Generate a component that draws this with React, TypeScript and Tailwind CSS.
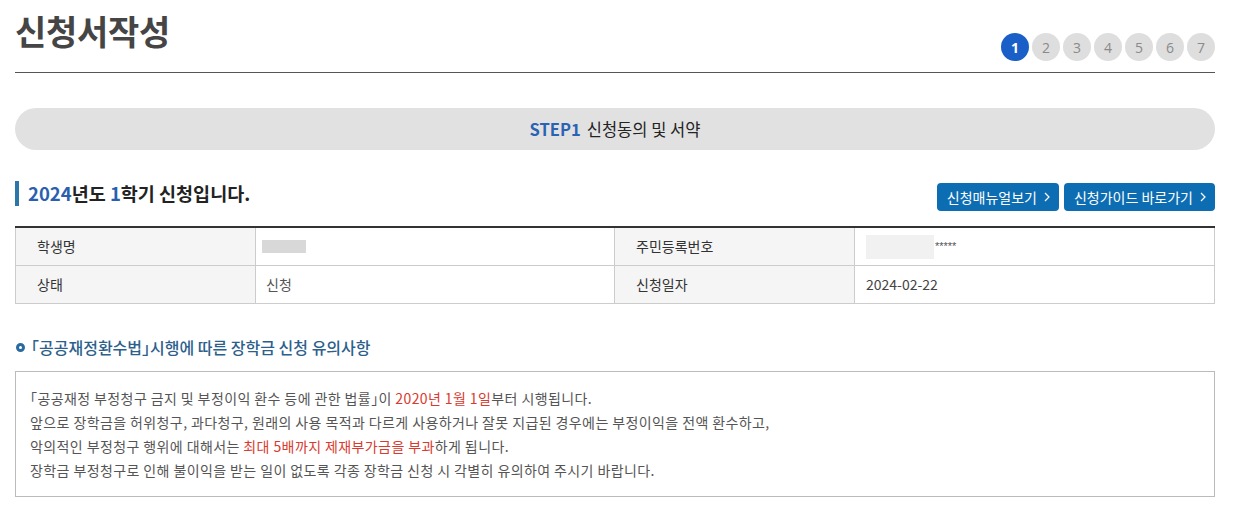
import React from "react";

const F = { fontFamily: '"Noto Sans CJK KR", "Noto Sans", sans-serif' };

function Chevron() {
  return (
    <svg width="6" height="10" viewBox="0 0 6 10" className="ml-[7px]" fill="none">
      <polyline points="1,1 5,5 1,9" stroke="white" strokeWidth="1.2" />
    </svg>
  );
}

export default function App() {
  const steps = [1, 2, 3, 4, 5, 6, 7];
  return (
    <div className="w-[1236px] h-[513px] bg-white text-[#333]" style={F}>
      <div className="pl-[15px] pr-[21px]">
        {/* header */}
        <div className="flex items-end justify-between h-[73px] border-b border-[#555]">
          <h1 className="text-[34px] font-bold text-[#454545] leading-none self-start mt-[14px] tracking-[-0.3px]">신청서작성</h1>
          <div className="flex gap-[3px] mb-[11px]">
            {steps.map((s) => (
              <div
                key={s}
                className={
                  s === 1
                    ? "w-[28px] h-[28px] rounded-full bg-[#1a5fc8] text-white font-bold text-[14px] flex items-center justify-center"
                    : "w-[28px] h-[28px] rounded-full bg-[#dedede] text-[#8a8a8a] text-[14px] flex items-center justify-center"
                }
                style={{ fontFamily: '"Open Sans", sans-serif' }}
              >
                {s}
              </div>
            ))}
          </div>
        </div>

        {/* step banner */}
        <div className="mt-[35px] h-[42px] rounded-full bg-[#e1e1e1] flex items-center justify-center text-[16.5px] text-[#222]">
          <span className="font-bold text-[#2a62b4] mr-[6px]">STEP1</span>
          <span>신청동의 및 서약</span>
        </div>

        {/* section heading */}
        <div className="mt-[33px] flex items-start justify-between h-[28px]">
          <div className="flex items-center mt-[-2px]">
            <div className="w-[4px] h-[25px] bg-[#2b78a8]" />
            <h2 className="ml-[9px] text-[18.5px] font-bold text-[#222] leading-none">
              <span className="text-[#2a5fb0]">2024</span>년도 <span className="text-[#2a5fb0]">1</span>학기 신청입니다.
            </h2>
          </div>
          <div className="flex gap-[5px]">
            <button className="h-[28px] pl-[10px] pr-[9px] rounded-[4px] bg-[#0d6db3] text-white text-[14px] flex items-center">
              신청매뉴얼보기<Chevron />
            </button>
            <button className="h-[28px] pl-[10px] pr-[9px] rounded-[4px] bg-[#0d6db3] text-white text-[14px] flex items-center">
              신청가이드 바로가기<Chevron />
            </button>
          </div>
        </div>

        {/* info table */}
        <div className="mt-[15px] border-t-2 border-[#333] text-[14px]">
          <div className="grid grid-cols-[240px_359px_240px_361px] border-b border-[#ccc] h-[38px]">
            <div className="bg-[#f5f5f5] border-l border-[#ccc] pl-[21px] flex items-center">학생명</div>
            <div className="border-l border-[#ccc] pl-[6px] flex items-center">
              <div className="w-[44px] h-[13px] bg-[#d8d8d8]" />
            </div>
            <div className="bg-[#f5f5f5] border-l border-[#ccc] pl-[21px] flex items-center">주민등록번호</div>
            <div className="border-l border-r border-[#ccc] pl-[11px] flex items-center">
              <div className="w-[68px] h-[24px] bg-[#f1f1f1]" />
              <span className="text-[11px] text-[#555] ml-[1px]" style={{ fontFamily: '"Liberation Sans", sans-serif' }}>*****</span>
            </div>
          </div>
          <div className="grid grid-cols-[240px_359px_240px_361px] border-b border-[#ccc] h-[38px]">
            <div className="bg-[#f5f5f5] border-l border-[#ccc] pl-[21px] flex items-center">상태</div>
            <div className="border-l border-[#ccc] pl-[10px] flex items-center text-[#555]">신청</div>
            <div className="bg-[#f5f5f5] border-l border-[#ccc] pl-[21px] flex items-center">신청일자</div>
            <div className="border-l border-r border-[#ccc] pl-[11px] flex items-center text-[#444]">2024-02-22</div>
          </div>
        </div>

        {/* notice heading */}
        <div className="mt-[33px] flex items-center h-[20px]">
          <div className="w-[9px] h-[9px] rounded-full border-[3px] border-[#2b6aa0] ml-[1px]" />
          <h3 className="ml-[6px] text-[16px] font-medium text-[#2d5f8c] leading-none [font-feature-settings:'halt']">「공공재정환수법」시행에 따른 장학금 신청 유의사항</h3>
        </div>

        {/* notice box */}
        <div className="mt-[14px] border border-[#bbb] h-[126px] pl-[14px] pt-[14px] text-[14px] tracking-[0.4px] text-[#555] leading-[24px] [font-feature-settings:'halt']">
          <p>「공공재정 부정청구 금지 및 부정이익 환수 등에 관한 법률」이 <span className="text-[#d93a2f]">2020년 1월 1일</span>부터 시행됩니다.</p>
          <p>앞으로 장학금을 허위청구, 과다청구, 원래의 사용 목적과 다르게 사용하거나 잘못 지급된 경우에는 부정이익을 전액 환수하고,</p>
          <p>악의적인 부정청구 행위에 대해서는 <span className="text-[#d93a2f]">최대 5배까지 제재부가금을 부과</span>하게 됩니다.</p>
          <p>장학금 부정청구로 인해 불이익을 받는 일이 없도록 각종 장학금 신청 시 각별히 유의하여 주시기 바랍니다.</p>
        </div>
      </div>
    </div>
  );
}
